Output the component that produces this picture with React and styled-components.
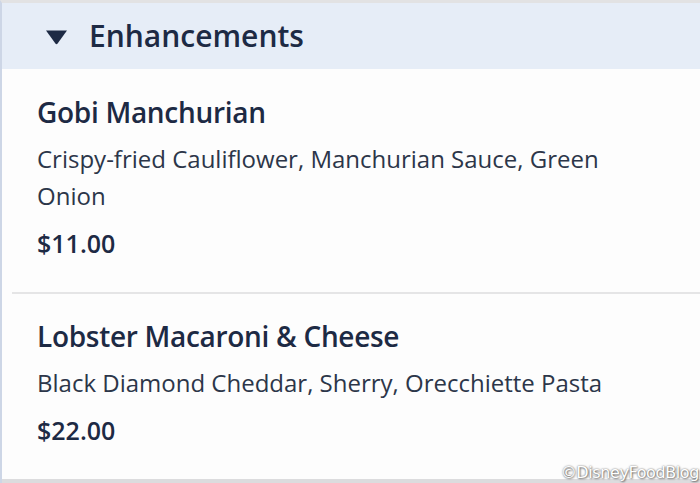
import React from "react";
import styled, { createGlobalStyle } from "styled-components";

const GlobalStyle = createGlobalStyle`
  html, body {
    margin: 0;
    padding: 0;
    background: #fdfdfd;
  }
  body {
    font-family: "Open Sans", "Noto Sans", sans-serif;
  }
`;

const Page = styled.div`
  position: relative;
  width: 700px;
  height: 483px;
  overflow: hidden;
  background: #fdfdfd;
  border-top: 3px solid #e2e2e3;
  border-left: 2px solid #cdd6e6;
  box-sizing: border-box;
  display: flex;
  flex-direction: column;
`;

const SectionHeader = styled.div`
  height: 66px;
  flex: none;
  background: #e6edf7;
  display: flex;
  align-items: center;
  gap: 21px;
  padding-left: 43px;
  color: #1d2a44;
`;

const Caret = styled.svg`
  width: 23px;
  height: 16px;
  flex: none;
  margin-top: 2px;
`;

const SectionTitle = styled.h2`
  margin: 0;
  font-size: 30px;
  line-height: 40px;
  font-weight: 600;
`;

const ItemList = styled.div`
  flex: 1;
  display: flex;
  flex-direction: column;
`;

const Item = styled.div`
  padding: ${(p) => p.$pad};
  margin-left: 10px;
  border-bottom: ${(p) => (p.$divider ? "2px solid #e5e5e6" : "none")};
`;

const ItemName = styled.div`
  font-size: 28px;
  font-weight: 600;
  letter-spacing: -0.3px;
  color: #1d2a44;
  line-height: 30px;
`;

const ItemDesc = styled.div`
  margin-top: 13px;
  max-width: 600px;
  font-size: 24px;
  line-height: 37px;
  color: #2c3649;
`;

const ItemPrice = styled.div`
  margin-top: 14px;
  font-size: 25px;
  font-weight: 600;
  line-height: 30px;
  color: #1d2a44;
`;

const BottomEdge = styled.div`
  height: 4px;
  flex: none;
  background: #dcdcde;
`;

const Watermark = styled.div`
  position: absolute;
  right: 1px;
  bottom: 1px;
  font-family: "DejaVu Sans", Verdana, sans-serif;
  font-size: 16px;
  letter-spacing: -0.4px;
  color: #ffffff;
  text-shadow: 0 0 2px rgba(0, 0, 0, 0.6), 1px 1px 2px rgba(0, 0, 0, 0.45);
`;

const items = [
  {
    name: "Gobi Manchurian",
    desc: "Crispy-fried Cauliflower, Manchurian Sauce, Green Onion",
    price: "$11.00",
    pad: "28px 0 34px 25px",
    divider: true,
  },
  {
    name: "Lobster Macaroni & Cheese",
    desc: "Black Diamond Cheddar, Sherry, Orecchiette Pasta",
    price: "$22.00",
    pad: "27px 0 0 25px",
    divider: false,
  },
];

export default function App() {
  return (
    <>
      <GlobalStyle />
      <Page>
        <SectionHeader>
          <Caret viewBox="0 0 23 16">
            <path d="M1 1.5 L22 1.5 L12.6 14.6 Q11.5 16 10.4 14.6 Z" fill="#1d2a44" />
          </Caret>
          <SectionTitle>Enhancements</SectionTitle>
        </SectionHeader>
        <ItemList>
          {items.map((it) => (
            <Item key={it.name} $pad={it.pad} $divider={it.divider}>
              <ItemName>{it.name}</ItemName>
              <ItemDesc>{it.desc}</ItemDesc>
              <ItemPrice>{it.price}</ItemPrice>
            </Item>
          ))}
        </ItemList>
        <BottomEdge />
        <Watermark>©DisneyFoodBlog</Watermark>
      </Page>
    </>
  );
}
